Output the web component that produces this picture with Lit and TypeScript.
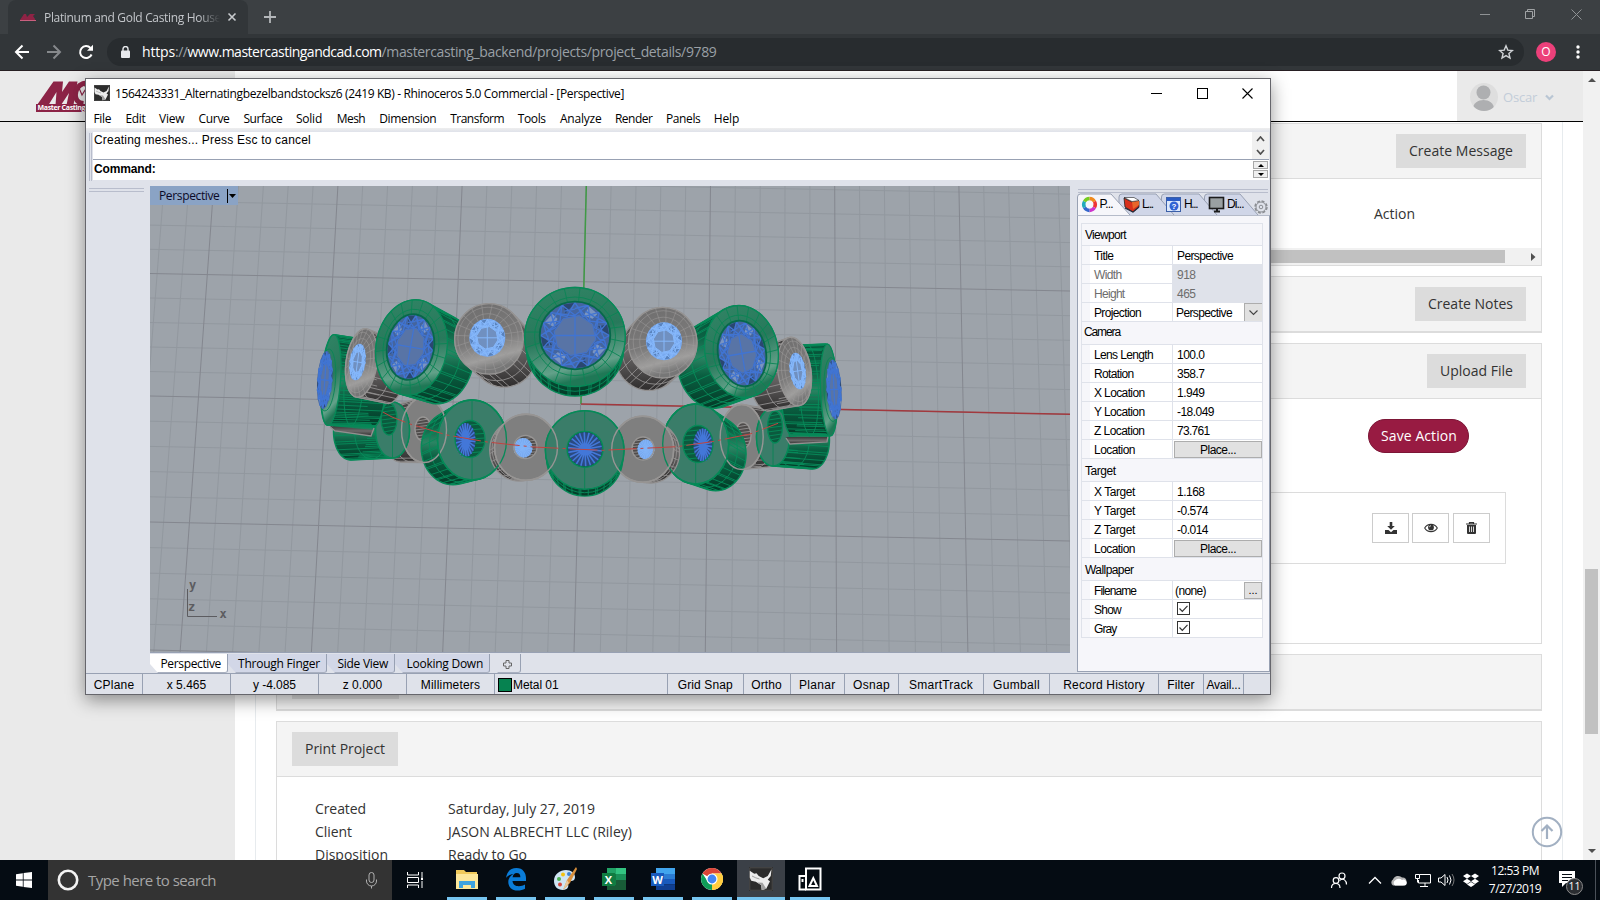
import { LitElement, html, css, svg } from "lit";
import { customElement, property } from "lit/decorators.js";

/* Text run spread over a given width. */
@customElement("fit-text")
class FitText extends LitElement {
  @property({ type: Number }) w = 0;
  static styles = css`
    :host { display: inline-block; white-space: pre; flex: none; text-align: left; }
  `;
  firstUpdated() {
    const natural = this.getBoundingClientRect().width;
    const n = (this.textContent || "").length;
    if (!this.w || !n) return;
    this.style.letterSpacing = ((this.w - natural) / n).toFixed(3) + "px";
    this.style.width = this.w + "px";
  }
  render() { return html`<slot></slot>`; }
}

const fit = (t: string, w: number) => html`<fit-text .w=${w}>${t}</fit-text>`;

/* ---------- 3D scene ---------- */
type P = [number, number];
const f1 = (n: number) => n.toFixed(1);

function ellPt(cx: number, cy: number, rx: number, ry: number, rot: number, a: number): P {
  const c = Math.cos((rot * Math.PI) / 180), s = Math.sin((rot * Math.PI) / 180);
  const x = rx * Math.cos(a), y = ry * Math.sin(a);
  return [cx + x * c - y * s, cy + x * s + y * c];
}

function hull(points: P[]): P[] {
  const p = [...points].sort((a, b) => a[0] - b[0] || a[1] - b[1]);
  const cr = (o: P, a: P, b: P) => (a[0] - o[0]) * (b[1] - o[1]) - (a[1] - o[1]) * (b[0] - o[0]);
  const half = (list: P[]) => {
    const h: P[] = [];
    for (const q of list) {
      while (h.length > 1 && cr(h[h.length - 2], h[h.length - 1], q) <= 0) h.pop();
      h.push(q);
    }
    h.pop();
    return h;
  };
  return [...half(p), ...half(p.reverse())];
}

const toPath = (p: P[]) => "M" + p.map((q) => f1(q[0]) + " " + f1(q[1])).join("L") + "Z";
const ell = (cx: number, cy: number, rx: number, ry: number, rot: number, cls: string) =>
  svg`<ellipse class=${cls} cx=${f1(cx)} cy=${f1(cy)} rx=${f1(rx)} ry=${f1(ry)} transform="rotate(${rot} ${f1(cx)} ${f1(cy)})"/>`;

interface Part {
  x: number; y: number; rx: number; ry: number; rot?: number;
  dx: number; dy: number; k?: number; n?: number; c: "g" | "s";
}

function body(o: Part) {
  const rot = o.rot ?? 0, k = o.k ?? 0.95, n = o.n ?? 34;
  const pts: P[] = [];
  for (let i = 0; i < 60; i++) {
    const a = (i / 60) * Math.PI * 2;
    pts.push(ellPt(o.x, o.y, o.rx, o.ry, rot, a));
    pts.push(ellPt(o.x + o.dx, o.y + o.dy, o.rx * k, o.ry * k, rot, a));
  }
  let lines = "";
  for (let i = 0; i < n; i++) {
    const a = (i / n) * Math.PI * 2 + (i % 3) * 0.05;
    const p = ellPt(o.x, o.y, o.rx, o.ry, rot, a), q = ellPt(o.x + o.dx, o.y + o.dy, o.rx * k, o.ry * k, rot, a);
    lines += `M${f1(p[0])} ${f1(p[1])}L${f1(q[0])} ${f1(q[1])}`;
  }
  const d = toPath(hull(pts));
  return svg`
    <path class="${o.c}-body" d=${d}/>
    <path class="${o.c}-line" d=${lines}/>
    ${[0.5].map((t) => ell(o.x + o.dx * t, o.y + o.dy * t, o.rx * (1 - (1 - k) * t), o.ry * (1 - (1 - k) * t), rot, o.c + "-line"))}
    <path class="${o.c}-edge" d=${d}/>`;
}

function gem(x: number, y: number, rx: number, ry: number, rot: number, dark: boolean) {
  let star = "", web = "", oct = "", fac = "", shade = "";
  const at = (r: number, a: number) => { const p = ellPt(x, y, rx * r, ry * r, rot, a); return f1(p[0]) + " " + f1(p[1]); };
  const n = 16;
  for (let i = 0; i < n; i++) {
    const a = (i / n) * Math.PI * 2, b = ((i + 1) / n) * Math.PI * 2, c = ((i + 2) / n) * Math.PI * 2;
    star += `M${at(0.98, a)}L${at(0.6, b)}L${at(0.98, c)}`;
    if (i % 2 === 0) {
      web += `M${at(0.96, a)}L${at(0.58, c)}M${at(0.8, a)}L${at(0.97, b)}`;
      oct += (i ? "L" : "M") + at(0.6, a + 0.2);
    } else web += `M${at(0.78, a)}L${at(0.78, b)}`;
    if (i % 4 === 1) fac += `M${at(0.64, a)}L${at(0.94, a + 0.05)}L${at(0.9, b)}L${at(0.7, b)}Z`;
    if (i % 4 === 3) shade += `M${at(0.7, a)}L${at(0.97, a + 0.05)}L${at(0.97, b)}Z`;
  }
  const p = dark ? "d" : "l";
  return svg`
    ${ell(x, y, rx, ry, rot, p + "-gem")}
    <path class="${p}-fac" d=${fac}/>
    <path class="${p}-shade" d=${shade}/>
    <path class="${p}-oct" d=${oct + "Z"}/>
    <path class="${p}-wire" d=${star + web}/>
    <path class="${p}-wire" d="M${at(0.6, 0)}L${at(0.6, Math.PI)}M${at(0.6, Math.PI / 2)}L${at(0.6, -Math.PI / 2)}"/>`;
}

function head(o: Part & { gx: number; gy: number; grx: number; gry: number }) {
  const rot = o.rot ?? 0;
  let spokes = "";
  for (let i = 0; i < 20; i++) {
    const a = (i / 20) * Math.PI * 2 + 0.1;
    const p = ellPt(o.x, o.y, o.rx, o.ry, rot, a), q = ellPt(o.gx, o.gy, o.grx, o.gry, rot, a);
    spokes += `M${f1(p[0])} ${f1(p[1])}L${f1(q[0])} ${f1(q[1])}`;
  }
  return svg`
    ${body(o)}
    ${ell(o.x, o.y, o.rx, o.ry, rot, o.c + "-face")}
    ${ell((o.x + o.gx) / 2, (o.y + o.gy) / 2, o.rx * 0.35 + o.grx * 0.65, o.ry * 0.35 + o.gry * 0.65, rot, o.c + "-thin")}
    ${o.c === "s" ? ell((o.x + o.gx) / 2, (o.y + o.gy) / 2, o.rx * 0.75 + o.grx * 0.25, o.ry * 0.75 + o.gry * 0.25, rot, "s-thin") : ""}
    <path class="${o.c}-thin" d=${spokes}/>
    ${gem(o.gx, o.gy, o.grx, o.gry, rot, o.c === "g")}
    ${o.c === "g" ? ell(o.gx, o.gy, o.grx, o.gry, rot, "g-inner") : ""}`;
}

function disc(o: Part & { hx: number; hy: number; hrx: number; hry: number; gem?: [number, number, number, number] }) {
  let rays = "", slats = "";
  if (o.gem) {
    const [x, y, rx, ry] = o.gem;
    for (let i = 0; i < 22; i++) {
      const a = (i / 22) * Math.PI * 2 + 0.1;
      rays += `M${f1(x)} ${f1(y)}L${f1(x + rx * Math.cos(a))} ${f1(y + ry * Math.sin(a))}`;
    }
  }
  for (let i = -3; i <= 3; i++) {
    const w = o.hrx * Math.sqrt(1 - (i / 4) ** 2), y = o.hy + (i / 4) * o.hry;
    slats += `M${f1(o.hx - w)} ${f1(y + 1)}L${f1(o.hx + w)} ${f1(y - 1)}`;
  }
  return svg`
    ${body(o)}
    ${ell(o.x, o.y, o.rx, o.ry, 0, o.c + "-disc")}
    ${o.c === "g" ? svg`<path class="g-thin" d="M${o.x} ${o.y - o.ry}V${o.y + o.ry}"/>` : ""}
    ${ell(o.hx, o.hy, o.hrx, o.hry, 0, o.c + "-hole")}
    <path class="${o.c}-line" d=${slats}/>
    ${o.gem ? svg`${ell(o.gem[0], o.gem[1], o.gem[2], o.gem[3], 0, o.c === "g" ? "ray-bg" : "l-gem")}
      <path class=${o.c === "g" ? "ray" : "ray-l"} d=${rays}/>` : ""}
    ${ell(o.hx, o.hy, o.hrx, o.hry, 0, o.c + "-rim")}`;
}

function grid() {
  let minor = "", major = "";
  for (let i = -22; i <= 22; i++) {
    const t = i / 5;
    const d = `M${f1(586.3 + t * 124.2)} 186L${f1(574 + t * 131.3)} 652`;
    if (i % 5 === 0) major += d; else minor += d;
  }
  const L = [152.5, 273.5, 396, 522, 650, 782], R = [170, 291, 414.3, 541, 671, 803];
  for (let m = 0; m < 5; m++)
    for (let j = 0; j < 5; j++) {
      const y0 = L[m] + ((L[m + 1] - L[m]) * j) / 5, y1 = R[m] + ((R[m + 1] - R[m]) * j) / 5;
      const d = `M150 ${f1(y0)}L1070 ${f1(y1)}`;
      if (j === 0) major += d; else minor += d;
    }
  return svg`<path class="minor" d=${minor}/><path class="major" d=${major}/>`;
}

const scene = () => html`
<svg class="scene" viewBox="150 186 920 466" width="920" height="466">
  <defs>
    <linearGradient id="gb" x1="0" y1="0" x2="0" y2="1">
      <stop offset="0" stop-color="#064d34"/><stop offset=".3" stop-color="#0b6244"/><stop offset=".5" stop-color="#2a8563"/><stop offset=".68" stop-color="#0a5f41"/><stop offset="1" stop-color="#033a27"/>
    </linearGradient>
    <linearGradient id="sb" x1="0" y1="0" x2="0" y2="1">
      <stop offset="0" stop-color="#3a3838"/><stop offset=".5" stop-color="#6c6a6a"/><stop offset="1" stop-color="#2f2d2d"/>
    </linearGradient>
    <linearGradient id="gf" x1="0" y1="0" x2=".25" y2="1">
      <stop offset="0" stop-color="#1f7856"/><stop offset=".12" stop-color="#2f8263"/><stop offset=".55" stop-color="#27795b"/><stop offset=".88" stop-color="#62a189"/><stop offset="1" stop-color="#1f7856"/>
    </linearGradient>
    <linearGradient id="sf" x1="0" y1="0" x2=".25" y2="1">
      <stop offset="0" stop-color="#6e6d6d"/><stop offset=".6" stop-color="#7b7a7a"/><stop offset=".85" stop-color="#a09f9e"/><stop offset="1" stop-color="#777"/>
    </linearGradient>
  </defs>
  ${grid()}
  <path class="axis-y" d="M586.3 186L581 404"/>
  <path class="axis-x" d="M581 404L1070 414.3"/>

  ${disc({ c: "s", x: 424, y: 430, rx: 22.5, ry: 32.5, dx: -22, dy: 3, k: 0.9, n: 18, hx: 423, hy: 429, hrx: 8, hry: 12 })}
  ${disc({ c: "g", x: 392.5, y: 430, rx: 17, ry: 28, dx: -42, dy: 2, k: 1, n: 34, hx: 389, hy: 419, hrx: 8, hry: 16 })}
  ${disc({ c: "s", x: 741.7, y: 437, rx: 21.5, ry: 32.5, dx: 24, dy: 1, k: 0.9, n: 18, hx: 743, hy: 435.5, hrx: 8, hry: 13 })}
  ${disc({ c: "g", x: 773, y: 437, rx: 16.5, ry: 29, dx: 40, dy: 3, k: 1, n: 34, hx: 775, hy: 427, hrx: 7.5, hry: 16 })}
  ${disc({ c: "g", x: 472, y: 440, rx: 34.5, ry: 40, dx: -19, dy: 8, k: 0.92, n: 44, hx: 470, hy: 439, hrx: 15, hry: 18.5, gem: [465.5, 440, 10, 17] })}
  ${disc({ c: "g", x: 695.7, y: 444, rx: 33, ry: 40, dx: 20, dy: 10, k: 0.92, n: 44, hx: 698, hy: 444, hrx: 15, hry: 18.5, gem: [703, 445, 9.5, 16.5] })}
  ${disc({ c: "s", x: 526, y: 447.3, rx: 31.5, ry: 33, dx: -7, dy: 3, k: 0.93, n: 30, hx: 525.5, hy: 447, hrx: 11.5, hry: 11.5, gem: [523, 448, 9.5, 10] })}
  ${disc({ c: "s", x: 642.7, y: 449.3, rx: 31, ry: 33, dx: 8, dy: 3, k: 0.93, n: 30, hx: 643, hy: 448.5, hrx: 11, hry: 11.5, gem: [646, 449.5, 8.5, 10] })}
  ${disc({ c: "g", x: 584.7, y: 450, rx: 39.3, ry: 39.3, dx: 0, dy: 8, k: 0.97, n: 44, hx: 585, hy: 449.3, hrx: 18, hry: 18, gem: [585, 449.3, 17, 17] })}
  ${ell(424, 430, 22.5, 32.5, 0, "s-rim")}${ell(741.7, 437, 21.5, 32.5, 0, "s-rim")}
  ${ell(472, 440, 34.5, 40, 0, "g-rim")}${ell(695.7, 444, 33, 40, 0, "g-rim")}
  ${ell(526, 447.3, 31.5, 33, 0, "s-rim")}${ell(642.7, 449.3, 31, 33, 0, "s-rim")}
  <path class="red" d="M380 410.500L392 417L410 424L447 435L487 442L533 447L580 449.300L603 450.300L643 448.300L677 446.700L712 441.700L750 434L778 423.300"/>

  <path class="s-body" d="M330 426L374 430L371 436L335 431Z"/><path class="s-edge" d="M330 427L335 431L371 436L374 428"/>
  <path class="s-body" d="M786 437L828 437L827 442L790 444Z"/><path class="s-edge" d="M786 438L790 444L827 442L828 436"/>
  ${body({ c: "g", x: 331, y: 380, rx: 10, ry: 45.5, rot: 4, dx: 46, dy: 4, k: 0.93, n: 40 })}
  ${ell(331, 380, 9.5, 45.5, 4, "g-face")}
  ${ell(327, 380, 8.5, 31, 4, "g-thin")}
  ${gem(324.8, 380, 7.6, 29, 4, true)}
  ${body({ c: "g", x: 828, y: 390, rx: 9.5, ry: 46, rot: -2, dx: -38, dy: 0, k: 0.97, n: 40 })}
  ${ell(829, 390, 8.5, 46, -2, "g-face")}
  ${ell(832, 389.5, 8, 32, -2, "g-thin")}
  ${gem(834, 389.5, 7.5, 30, -3, true)}

  ${head({ c: "s", x: 361.5, y: 363, rx: 15.5, ry: 34.5, rot: 8, dx: 30, dy: 9, k: 0.92, n: 20, gx: 357.5, gy: 362, grx: 8, gry: 18.5 })}
  ${head({ c: "s", x: 794.5, y: 371.5, rx: 16.5, ry: 34.5, rot: -8, dx: -30, dy: 8, k: 0.92, n: 20, gx: 797.7, gy: 371, grx: 8, gry: 18.5 })}
  ${head({ c: "g", x: 411.5, y: 347.5, rx: 35.5, ry: 48, rot: 10, dx: 29, dy: 12, k: 0.93, n: 44, gx: 410.5, gy: 347, grx: 23.5, gry: 33 })}
  ${head({ c: "g", x: 741.5, y: 351.5, rx: 36.5, ry: 46.2, rot: -10, dx: -30, dy: 14, k: 0.93, n: 44, gx: 742, gy: 353.5, grx: 24, gry: 33 })}
  ${head({ c: "s", x: 489, y: 338.9, rx: 34.3, ry: 35.3, dx: 15, dy: 14, k: 0.97, n: 24, gx: 487.3, gy: 337.8, grx: 18, gry: 19 })}
  ${head({ c: "s", x: 662.7, y: 342.7, rx: 34.3, ry: 35.3, dx: -14, dy: 13.5, k: 0.97, n: 24, gx: 664, gy: 341.2, grx: 18, gry: 19 })}
  ${head({ c: "g", x: 575, y: 337, rx: 50.2, ry: 49.5, dx: 0, dy: 11, k: 0.97, n: 44, gx: 575, gy: 335.5, grx: 35.3, gry: 33.8 })}

  <path class="tri" d="M187.500 589V616.500H217"/>
  <g class="tri-t"><text x="189" y="589">y</text><text x="188" y="611">z</text><text x="219.500" y="618">x</text></g>
</svg>`;

/* ---------- icons ---------- */
const rhino = (s: number) => svg`<svg width=${s} height=${s} viewBox="0 0 16 16">
  <rect width="16" height="16" fill="#111"/><rect x=".5" y=".5" width="15" height="15" fill="#2c2c2c" stroke="#555" stroke-width=".6"/>
  <path d="M.5 2.500L3.500 4.500L5 4.200L6.500 6L9.500 7.500L12.500 6L15 1.500L14.500 6L12.500 8.500L14 9.500L11.500 14.500L8.500 15.300L8 12L4.500 9.800L1.500 9.200L.5 7Z" fill="#ececec"/>
  <path d="M5.500 10.300L9 10.500L11.500 14.500L8.500 15.300L8 12Z" fill="#9f9f9f"/><path d="M2 6l2.500 1.200L7 8" stroke="#999" stroke-width=".6" fill="none"/></svg>`;

const ICONS: Record<string, any> = {
  folder: svg`<svg width="26" height="26" viewBox="0 0 26 26"><path d="M2 4h8l2 2h11v17H2z" fill="#f0c95a"/><path d="M2 8h22v15H2z" fill="#fde79a"/><path d="M5 22v-7h16v7h-4v-3h-8v3z" fill="#3fa3df"/></svg>`,
  edge: svg`<svg width="24" height="26" viewBox="0 0 24 26"><path d="M2 12C3 5 7 2 12.500 2 19 2 22 7 22 12v3H8.500c.3 3.600 3 5.200 6.300 5.200 2.400 0 4.400-.6 6.200-1.700v4.300c-2 1.200-4.600 1.800-7.300 1.800C8 24.600 4.300 21 4.300 16c0-3.500 2-6.500 5-8C6 8.300 3.500 10 2 12zm6.600-.8h7.800c0-2.600-1.200-4.200-3.700-4.200-2.300 0-3.700 1.700-4.100 4.200z" fill="#0a7cd8"/></svg>`,
  paint: svg`<svg width="26" height="26" viewBox="0 0 26 26"><path d="M2 15C2 8 8 4 14 4c5 0 9 3 9 7 0 4-3 4-5 4s-3 1-2 3 0 6-5 6c-6 0-9-4-9-9z" fill="#cfe4f3"/><circle cx="7" cy="13" r="2" fill="#4caf50"/><circle cx="11" cy="8.500" r="2" fill="#f4c20d"/><circle cx="17" cy="8" r="2" fill="#3b82d0"/><circle cx="8" cy="18.500" r="2" fill="#d6453c"/><path d="M24 1L15 14l-4 10 7-7 7-14z" fill="#d9903c"/><path d="M15 14l-4 10 6-7z" fill="#e8c9a0"/></svg>`,
  excel: svg`<svg width="26" height="26" viewBox="0 0 26 26"><rect x="6" y="2" width="19" height="22" fill="#21a366"/><rect x="15" y="2" width="10" height="6" fill="#33c481"/><rect x="6" y="13" width="19" height="11" fill="#185c37"/><rect x="15" y="8" width="10" height="6" fill="#1a9058"/><rect x="6" y="8" width="9" height="11" fill="#107c41"/><rect x="1" y="7" width="13" height="13" fill="#107c41"/><text x="7.500" y="17.500" class="ic">X</text></svg>`,
  word: svg`<svg width="26" height="26" viewBox="0 0 26 26"><rect x="6" y="2" width="19" height="6" fill="#41a5ee"/><rect x="6" y="8" width="19" height="5.500" fill="#2b7cd3"/><rect x="6" y="13" width="19" height="5.500" fill="#185abd"/><rect x="6" y="18.500" width="19" height="5.500" fill="#103f91"/><rect x="1" y="7" width="13" height="13" fill="#185abd"/><text x="7.500" y="17.500" class="ic">W</text></svg>`,
  chrome: svg`<svg width="24" height="24" viewBox="0 0 24 24"><circle cx="12" cy="12" r="11" fill="#fff"/><path d="M12 12L2.500 6.500A11 11 0 0 1 21.500 6.500H12z" fill="#db4437"/><path d="M12 12L21.500 6.500A11 11 0 0 1 12 23z" fill="#ffcd40"/><path d="M12 12v11A11 11 0 0 1 2.500 6.500L8 15z" fill="#0f9d58"/><path d="M12 6.500h9.500A11 11 0 0 1 12 23l5-8z" fill="#ffcd40"/><circle cx="12" cy="12" r="5.500" fill="#fff"/><circle cx="12" cy="12" r="4.400" fill="#4285f4"/></svg>`,
  rhino: rhino(24),
  scan: svg`<svg width="24" height="24" viewBox="0 0 24 24" fill="none" stroke="#fff" stroke-width="2"><path d="M8 22.500V1.500h14.500v21z"/><path d="M8 9H1.500v13.500H8M4.500 12v3"/><path d="M11.500 19L15.300 11 19 19z"/></svg>`,
};

const MENU: [string, number][] = [
  ["File", 17.5], ["Edit", 20], ["View", 25.5], ["Curve", 31], ["Surface", 39], ["Solid", 26],
  ["Mesh", 28.5], ["Dimension", 57], ["Transform", 53.8], ["Tools", 28], ["Analyze", 41.5],
  ["Render", 37.5], ["Panels", 34.5], ["Help", 25.5],
];
const STATUS: [string, number, number][] = [
  ["CPlane", 40.5, 57], ["x 5.465", 39.5, 88], ["y -4.085", 43, 88], ["z 0.000", 39.5, 88], ["Millimeters", 59.5, 88], ["Metal 01", 45.5, 173],
  ["Grid Snap", 55, 75.5], ["Ortho", 30.5, 47], ["Planar", 36.5, 54.5], ["Osnap", 37, 54], ["SmartTrack", 64, 85], ["Gumball", 47, 66],
  ["Record History", 81.5, 109], ["Filter", 27.5, 45], ["Avail...", 34, 40], ["", 0, 27],
];
const TABS: [string, number, number][] = [["Perspective", 60.5, 78], ["Through Finger", 82, 99], ["Side View", 50.5, 68], ["Looking Down", 76.5, 95]];
type Row = [string, number, string, number, string?];
const PROPS: [string, number, Row[]][] = [
  ["Viewport", 41, [["Title", 19.5, "Perspective", 56], ["Width", 27.5, "918", 18.5, "dis"], ["Height", 30.5, "465", 18.5, "dis"], ["Projection", 47, "Perspective", 56, "drop"]]],
  ["Camera", 36, [["Lens Length", 59, "100.0", 27.5], ["Rotation", 39.5, "358.7", 27.5], ["X Location", 50.5, "1.949", 27.5], ["Y Location", 50.5, "-18.049", 37], ["Z Location", 50.5, "73.761", 32.5], ["Location", 41, "Place...", 36, "btn"]]],
  ["Target", 30.5, [["X Target", 41, "1.168", 27.5], ["Y Target", 41, "-0.574", 31], ["Z Target", 41, "-0.014", 31], ["Location", 41, "Place...", 36, "btn"]]],
  ["Wallpaper", 48.5, [["Filename", 42, "(none)", 31, "file"], ["Show", 27, "", 0, "chk"], ["Gray", 22.5, "", 0, "chk"]]],
];

@customElement("app-root")
class AppRoot extends LitElement {
  static styles = css`
    :host { display: block; width: 1600px; height: 900px; position: relative; overflow: hidden; background: #fff;
      font-family: "Open Sans", "Noto Sans", sans-serif; color: #333; }
    * { box-sizing: border-box; }
    svg { display: block; flex: none; }
    .screen { display: flex; flex-direction: column; height: 900px; }
    /* browser */
    .strip { height: 34px; background: #3c4043; display: flex; padding-left: 8px; flex: none; }
    .tab { width: 240px; height: 34px; background: #323639; border-radius: 8px 8px 0 0; display: flex; align-items: center; padding-left: 12px; font-size: 12px; color: #c3c6ca; }
    .tab .name { width: 176px; margin-left: 8px; overflow: hidden; white-space: nowrap; -webkit-mask-image: linear-gradient(90deg, #000 88%, transparent); mask-image: linear-gradient(90deg, #000 88%, transparent); }
    .tab .x { margin-left: 7px; }
    .plus { margin: 11px 0 0 16px; }
    .ctl { margin-left: auto; display: flex; gap: 35px; padding: 9px 18px 0 0; }
    .bar { height: 37px; background: #323639; border-bottom: 1px solid #271f23; display: flex; align-items: center; flex: none; padding: 0 14px 0 14px; }
    .bar .b1 { margin-right: 16px; }
    .omni { width: 1417px; height: 28px; border-radius: 14px; background: #282c2f; margin-left: 13px; display: flex; align-items: center; padding: 0 10px 0 14px; font-size: 14px; color: #9aa0a6; }
    .omni .url { margin-left: 12px; display: flex; line-height: 18px; }
    .omni .hi { color: #fff; }
    .omni .star { margin-left: auto; }
    .ava { width: 20px; height: 20px; border-radius: 50%; background: #ec407a; color: #fff; font-size: 12px; line-height: 20px; text-align: center; margin-left: 12px; }
    .dots { margin-left: 20px; }
    /* page */
    .page { height: 789px; display: flex; flex: none; }
    .side { width: 235px; background: #eaeaea; flex: none; }
    .side .logo { height: 51px; border-bottom: 1px solid #000; padding: 9px 0 0 36px; }
    .main { flex: 1; display: flex; flex-direction: column; height: 789px; overflow: hidden; }
    .top { height: 51px; flex: none; border-bottom: 1px solid #000; display: flex; justify-content: flex-end; background: #fff; }
    .user { width: 126px; background: #eaeaea; display: flex; align-items: center; padding: 2px 0 0 13px; color: #c3cdd9; font-size: 13px; }
    .user .nm { margin: 0 8px 0 5px; }
    .wrap { margin: 0 20px; border: solid #e7ebee; border-width: 0 1px; padding: 1px 20px 0; height: 738px; }
    .card { border: 1px solid #dcdcdc; background: #fff; margin-bottom: 10px; width: 1266px; }
    .ch { height: 55px; background: #f4f4f4; border-bottom: 1px solid #dcdcdc; padding: 10px 15px; display: flex; }
    .ch.r { justify-content: flex-end; }
    .gb { height: 34px; background: #dcdcdc; font-size: 14px; line-height: 33px; padding: 0 13px; }
    .gb.blank { width: 107px; }
    .c1 { height: 143px; }
    .act { height: 69px; padding: 25px 0 0 1097px; font-size: 14px; line-height: 20px; }
    .hs { height: 17px; background: #f1f1f1; display: flex; align-items: center; justify-content: space-between; padding-right: 5px; }
    .hs i { width: 1228px; height: 13px; background: #c1c1c1; }
    .c2 { height: 57px; } .c3 { height: 301px; } .c4 { height: 57px; } .c5 { height: 200px; margin: 0; }
    .saverow { padding: 20px 72px 0 0; display: flex; justify-content: flex-end; }
    .save { width: 101px; height: 34px; border-radius: 17px; background: #981b42; border: 1px solid #7c1636; color: #fff; font-size: 14px; line-height: 31px; padding-left: 12px; }
    .file { margin: 39px 35px 0 36px; height: 72px; border: 1px solid #dcdcdc; display: flex; justify-content: flex-end; padding: 20px 15px 0; gap: 4px; }
    .fb { width: 37px; height: 30px; border: 1px solid #ccc; display: flex; align-items: center; justify-content: center; }
    .fb:first-child { margin-right: -1px; }
    .kv { display: grid; grid-template-columns: 133px auto; grid-auto-rows: 23px; padding: 20px 0 0 38px; font-size: 14px; line-height: 23px; justify-content: start; }
    .vs { width: 17px; background: #f1f1f1; display: flex; flex-direction: column; align-items: center; flex: none; }
    .vs .t { width: 13px; height: 165px; background: #c1c1c1; margin-top: 487px; }
    .vs .u { margin-top: 7px; } .vs .d { margin-top: 115px; }
    .totop { position: absolute; left: 1531px; top: 816px; }
    /* taskbar */
    .task { height: 40px; background: #050c13; display: flex; flex: none; }
    .start { width: 48px; display: flex; align-items: center; justify-content: center; }
    .search { width: 344px; background: #333; display: flex; align-items: center; padding-left: 9px; color: #a6a6a6; font-size: 15px; }
    .search .q { margin-left: 9px; } .search .m { margin-left: auto; margin-right: 14px; }
    .tv { width: 50px; display: flex; align-items: center; padding-left: 15px; }
    .app { width: 49px; display: flex; flex-direction: column; align-items: center; padding: 0 4px; }
    .app span { height: 38px; display: flex; align-items: center; }
    .app i { width: 40px; height: 3px; background: #76c5f0; margin-top: -1px; }
    .app.on { background: #3b4047; width: 48px; margin-left: 1px; padding: 0; } .app.on i { width: 48px; }
    .ic { font: bold 11px "Open Sans", sans-serif; fill: #fff; text-anchor: middle; }
    .tray { margin-left: auto; display: flex; align-items: center; color: #fff; font-size: 12px; }
    .clk { display: flex; flex-direction: column; align-items: center; line-height: 18px; width: 60px; }
    .note { margin-left: 13px; } .peek { width: 1px; height: 40px; background: #4a5058; margin: 0 4px 0 11px; }
    .note text { font: 10.5px "Open Sans", sans-serif; fill: #fff; text-anchor: middle; }
    /* CAD window */
    .win { position: absolute; left: 85px; top: 78px; width: 1186px; height: 617px; border: 1px solid #66666c; background: #dfe2ea; color: #000;
      box-shadow: 0 5px 17px rgba(0,0,0,.42); display: flex; flex-direction: column; font-size: 12px; }
    .title { height: 28px; background: #fff; display: flex; align-items: center; padding: 0 17px 0 8px; flex: none; }
    .title .n { margin-left: 5px; flex: 1; line-height: 18px; padding-top: 1px; }
    .title .c { display: flex; gap: 34.500px; }
    .menu { height: 21px; background: #fff; display: grid; grid-template-columns: 32px 33.500px 39.500px 44.900px 52.600px 40.700px 42.600px 71px 67.400px 42.300px 55px 51px 47.800px auto; padding: 1px 0 0 7.500px; line-height: 22px; flex: none; }
    .menu span { height: 20px; }
    .edge { height: 4px; background: linear-gradient(#eee, #dfe2ea); flex: none; }
    .cmd { height: 49px; display: flex; padding-left: 3px; flex: none; }
    .grip { width: 3px; border: solid #b8bdcc; border-width: 0 1px; margin: 1px 1px 0 0; height: 48px; }
    .cmd .in { width: 1176px; font-family: "Liberation Sans", Arial, sans-serif; }
    .hist { height: 28px; background: #fff; border-bottom: 1px solid #98a1b3; display: flex; justify-content: space-between; padding-left: 1px; line-height: 17px; }
    .prompt { height: 20px; background: #fff; display: flex; justify-content: space-between; padding-left: 1px; font-weight: bold; line-height: 18px; }
    .sb { width: 17px; background: #f0f0f0; display: flex; flex-direction: column; justify-content: space-between; align-items: center; padding: 4px 0; }
    .spin { width: 15px; height: 17px; display: flex; flex-direction: column; gap: 1px; margin: 1px 1px 0 0; }
    .spin i { flex: 1; border: 1px solid #a8a8a8; background: #efefef; display: flex; align-items: center; justify-content: center; }
    .mid { display: flex; height: 492px; flex: none; }
    .lcol { width: 64px; padding: 7px 0 0 3px; flex: none; }
    .lg { width: 55px; height: 4px; border: solid #b8bdcc; border-width: 1px 0; }
    .vpcol { width: 920px; padding-top: 5px; flex: none; }
    .vp { height: 467px; background: #9da3aa; border-bottom: 1px solid #98a1b3; position: relative; }
    .vlabel { position: absolute; left: 0; top: 0; width: 88px; height: 19px; background: #8aa3c5; color: #0a0a28; display: flex; align-items: center; padding: 1px 0 0 9px; line-height: 18px; }
    .vlabel svg { margin-left: 7px; }
    .scene .minor { stroke: #92989f; fill: none; } .scene .major { stroke: #84878f; fill: none; }
    .axis-y { stroke: #3f9a45; stroke-width: 1.500; } .axis-x { stroke: #a2393e; stroke-width: 1.500; }
    .g-body { fill: url(#gb); } .g-line { fill: none; stroke: #078b5a; stroke-width: .9; } .g-edge { fill: none; stroke: #068a58; stroke-width: 1.400; }
    .s-body { fill: url(#sb); } .s-line { fill: none; stroke: #929090; stroke-width: .9; } .s-edge { fill: none; stroke: #929090; stroke-width: 1.300; }
    .g-face { fill: url(#gf); stroke: #068a58; stroke-width: 1.300; } .s-face { fill: url(#sf); stroke: #969493; stroke-width: 1.300; }
    .g-thin { fill: none; stroke: #0a8455; stroke-width: .9; } .s-thin { fill: none; stroke: #9b9998; stroke-width: .8; opacity: .7; }
    .g-inner { fill: none; stroke: #06694a; stroke-width: 1.800; }
    .g-disc { fill: #3a7d69; stroke: #068a58; stroke-width: 1.500; } .s-disc { fill: #7f7f7f; stroke: #979594; stroke-width: 1.500; }
    .g-hole { fill: #0b5a3e; } .s-hole { fill: #4f4c4b; }
    .g-rim { fill: none; stroke: #068a58; stroke-width: 1.300; } .s-rim { fill: none; stroke: #979594; stroke-width: 1.400; }
    .d-gem { fill: #44659f; } .d-fac { fill: #8ba4cc; opacity: .75; } .d-shade { fill: #1f3a5c; opacity: .7; } .d-oct { fill: #5874a6; stroke: #4173cf; stroke-width: 1; } .d-wire { fill: none; stroke: #4074d2; stroke-width: 1.300; }
    .l-gem { fill: #79aaf0; } .l-fac { fill: #5078b0; opacity: .8; } .l-shade { fill: #5078b0; opacity: .8; } .l-oct { fill: #7090c0; stroke: #86b8fb; } .l-wire { fill: none; stroke: #86b8fb; stroke-width: 1; }
    .ray-bg { fill: #2a4a80; } .ray { stroke: #4377d8; stroke-width: 1.600; } .ray-l { stroke: #82b4f8; }
    .red { fill: none; stroke: #c04440; stroke-width: 1; stroke-dasharray: 28 4 3 4; }
    .tri { stroke: #5c5c60; fill: none; } .tri-t text { font: bold 12px "DejaVu Sans Mono", monospace; fill: #5c5c60; }
    .vtabs { display: flex; height: 20px; padding-top: 1px; line-height: 20px; }
    .vt { height: 19px; display: flex; justify-content: flex-end; padding-right: 6px; background: #d2d7e7; border-right: 1px solid #98a1b3; clip-path: polygon(0 0, 100% 0, 100% 100%, 8px 100%, 0 10px); border-bottom: 1px solid #a9b0c0; border-radius: 0 0 3px 0; }
    .vt.on { background: #fff; } .vt.p { width: 31px; background: #dfe2ea; padding: 6px 8px 0; }
    /* properties */
    .panel { width: 194px; margin-left: 7px; display: flex; flex-direction: column; padding-top: 8px; }
    .pg { width: 190px; height: 4px; border: solid #b8bdcc; border-width: 1px 0; flex: none; margin-left: 1px; }
    .ptabs { display: flex; height: 22px; flex: none; font-family: "Liberation Sans", sans-serif; }
    .pbody { height: 457px; border: 1px solid #98a1b3; border-top-color: #b5bbc9; background: #f6f6fa; padding: 7px 0 0 3px; width: 193px; font-family: "Liberation Sans", Arial, sans-serif; }
    .tbl { width: 182px; border: 1px solid #dfe2ea; border-bottom: 0; }
    .sec { height: 23px; border-bottom: 1px solid #dfe2ea; padding-left: 3px; line-height: 25px; }
    .tbl > .sec:first-child { height: 22px; line-height: 23px; }
    .sec.camera { line-height: 21px; padding-left: 2px; }
    .row { display: grid; grid-template-columns: 8px 83px 89px; height: 19px; }
    .row > * { border-bottom: 1px solid #dfe2ea; line-height: 20px; height: 19px; }
    .lab { background: #fff; padding-left: 4px; border-right: 1px solid #dfe2ea; }
    .val { background: #fff; padding-left: 4px; display: flex; }
    .dis .lab, .dis .val { color: #6d6d6d; } .dis .val { background: #dfe2ea; }
    .drop .val, .file2 .val { padding-left: 3px; justify-content: space-between; }
    .file2 .val { padding-left: 2px; }
    .dd { width: 18px; height: 18px; background: #e1e1e1; border: solid #adadad; border-width: 1px 0 0 1px; display: flex; align-items: center; justify-content: center; }
    .el { width: 18px; height: 17px; background: #e1e1e1; border: 1px solid #adadad; line-height: 15px; text-align: center; font-size: 11px; margin-top: 1px; }
    .btn .val { padding: 1px 0 0 1px; }
    .pb { width: 88px; height: 17px; background: #e1e1e1; border: 1px solid #adadad; line-height: 16px; text-align: center; }
    .chk .val { padding: 2px 0 0 4px; }
    .status { height: 21px; border-top: 1px solid #98a1b3; display: flex; font-family: "Liberation Sans", Arial, sans-serif; line-height: 22px; flex: none; }
    .cell { height: 20px; border-right: 1px solid #98a1b3; text-align: center; display: flex; justify-content: center; flex: none; }
    .cell.metal { justify-content: flex-start; padding-left: 3px; gap: 1px; }
    .sw { width: 14px; height: 14px; background: #068250; border: 1px solid #000; margin-top: 4px; }
    .cell:last-child { border: 0; }
  `;

  private browser() {
    return html`
    <div class="strip">
      <div class="tab">
        <svg width="16" height="8" viewBox="0 0 16 8"><path d="M0 7L4 1h2l1 3 3-3h5l-2 2 2 3v1z" fill="#8f2345"/><path d="M0 7.500h16" stroke="#c9607f"/></svg>
        <div class="name">${fit("Platinum and Gold Casting House", 177)}</div>
        <svg class="x" width="10" height="10" viewBox="0 0 10 10"><path d="M1.500 1.500l7 7M8.500 1.500l-7 7" stroke="#c8cbce" stroke-width="1.600"/></svg>
      </div>
      <svg class="plus" width="12" height="12" viewBox="0 0 12 12"><path d="M6 0v12M0 6h12" stroke="#b4b7ba" stroke-width="1.800"/></svg>
      <div class="ctl">
        <svg width="10" height="11"><path d="M0 5.500h10" stroke="#8f9294"/></svg>
        <svg width="11" height="11" fill="none" stroke="#a0a3a5"><path d="M.5 2.500h7v7h-7zM2.500 2.500v-2h7v7h-2"/></svg>
        <svg width="11" height="11"><path d="M.5.5l10 10M10.500.5l-10 10" stroke="#8f9294"/></svg>
      </div>
    </div>
    <div class="bar">
      <svg class="b1" width="16" height="16" viewBox="0 0 16 16"><path d="M15 8H2.500M8.500 1.500L2 8l6.500 6.500" fill="none" stroke="#fff" stroke-width="2"/></svg>
      <svg class="b1" width="16" height="16" viewBox="0 0 16 16"><path d="M1 8h12.500M7.500 1.500L14 8l-6.500 6.500" fill="none" stroke="#86898c" stroke-width="2"/></svg>
      <svg width="16" height="16" viewBox="0 0 16 16"><path d="M13.600 10.500A6 6 0 1 1 12.500 4" fill="none" stroke="#fff" stroke-width="2"/><path d="M15 .8v6H9z" fill="#fff"/></svg>
      <div class="omni">
        <svg width="9" height="12" viewBox="0 0 9 12"><rect y="4.500" width="9" height="7.500" rx="1" fill="#e8eaed"/><path d="M2 5V3a2.500 2.500 0 0 1 5 0v2" fill="none" stroke="#e8eaed" stroke-width="1.400"/></svg>
        <div class="url"><span class="hi">${fit("https", 33)}</span>${fit("://", 12.5)}<span class="hi">${fit("www.mastercastingandcad.com", 194)}</span>${fit("/mastercasting_backend/projects/project_details/9789", 335)}</div>
        <svg class="star" width="16" height="16" viewBox="0 0 16 16"><path d="M8 1.800l1.800 4.300 4.600.4-3.500 3 1.100 4.500L8 11.600 4 14l1.100-4.500-3.500-3 4.600-.4z" fill="none" stroke="#d0d3d6" stroke-width="1.400"/></svg>
      </div>
      <div class="ava">O</div>
      <svg class="dots" width="4" height="16"><circle cx="2" cy="3" r="1.700" fill="#fff"/><circle cx="2" cy="8" r="1.700" fill="#fff"/><circle cx="2" cy="13" r="1.700" fill="#fff"/></svg>
    </div>`;
  }

  private page() {
    return html`
    <div class="page">
      <div class="side"><div class="logo">
        <svg width="64" height="33" viewBox="0 0 64 33"><path d="M1 25L17.500 1.500H27L26 12 33 1.500h8.500L37.500 25h-7l2.500-12-8 12h-5.500l1-13L12.500 25z" fill="#8c2346"/><path d="M54 3.500C46 1 40 7 39.500 14c-.5 5 2 9 8 9.500" stroke="#8c2346" stroke-width="5" fill="none"/><path d="M43 8l4-3 4 2-5 8z" fill="none" stroke="#8c2346" stroke-width="1.200"/><rect y="24" width="64" height="8" fill="#8c2346"/><text x="1.500" y="30.300" font-size="7" font-weight="bold" fill="#fff" font-family="Open Sans" textLength="48">Master Casting</text></svg>
      </div></div>
      <div class="main">
        <div class="top"><div class="user">
          <svg width="28" height="28" viewBox="0 0 28 28"><defs><clipPath id="cp"><circle cx="14" cy="14" r="14"/></clipPath></defs><circle cx="14" cy="14" r="14" fill="#dedede"/><g clip-path="url(#cp)" fill="#aeafb1"><circle cx="13.500" cy="9.500" r="7"/><path d="M3 26c0-12 21-12 21 0-5 4-16 4-21 0z"/></g></svg>
          <span class="nm">${fit("Oscar", 34)}</span>
          <svg width="9" height="7" viewBox="0 0 9 7"><path d="M1 1.500l3.500 3.500L8 1.500" fill="none" stroke="#b9c6d4" stroke-width="2.200"/></svg>
        </div></div>
        <div class="wrap">
          <div class="card c1"><div class="ch r"><div class="gb">${fit("Create Message", 104)}</div></div>
            <div class="act">${fit("Action", 41)}</div>
            <div class="hs"><i></i><svg width="5" height="8"><path d="M0 0l4.500 4L0 8z" fill="#505050"/></svg></div></div>
          <div class="card c2"><div class="ch r"><div class="gb">${fit("Create Notes", 85)}</div></div></div>
          <div class="card c3"><div class="ch r"><div class="gb">${fit("Upload File", 73)}</div></div>
            <div class="saverow"><div class="save">${fit("Save Action", 76)}</div></div>
            <div class="file">
              <div class="fb"><svg width="12" height="12" viewBox="0 0 12 12" fill="#333"><path d="M4.700 0h2.600v4h2.500L6 7.800 2.200 4h2.500zM0 8h3.500L6 10.200 8.500 8H12v4H0z"/></svg></div>
              <div class="fb"><svg width="14" height="10" viewBox="0 0 14 10"><path d="M.7 5C3.500.2 10.500.2 13.300 5 10.500 9.800 3.500 9.800.7 5z" fill="none" stroke="#333" stroke-width="1.100"/><circle cx="7" cy="4.400" r="2.900" fill="#333"/><path d="M5.500 4.200a1.600 1.600 0 0 1 1.500-1.600" stroke="#fff" stroke-width=".7" fill="none"/></svg></div>
              <div class="fb"><svg width="11" height="12" viewBox="0 0 11 12"><path d="M0 2h11M3.500 1.800V.6h4v1.200" stroke="#333" stroke-width="1.200" fill="none"/><path d="M1 3h9v8q0 1-1 1H2q-1 0-1-1z" fill="#333"/><path d="M3.500 4.500v5.500M5.500 4.500v5.500M7.500 4.500v5.500" stroke="#fff" stroke-width=".8"/></svg></div>
            </div></div>
          <div class="card c4"><div class="ch"><div class="gb blank"></div></div></div>
          <div class="card c5"><div class="ch"><div class="gb">${fit("Print Project", 80)}</div></div>
            <div class="kv">
              <span>${fit("Created", 51)}</span><span>${fit("Saturday, July 27, 2019", 147)}</span>
              <span>${fit("Client", 37)}</span><span>${fit("JASON ALBRECHT LLC (Riley)", 184)}</span>
              <span>${fit("Disposition", 73)}</span><span>${fit("Ready to Go", 79)}</span>
            </div></div>
        </div>
      </div>
      <div class="vs"><svg class="u" width="8" height="4"><path d="M0 4l4-4 4 4z" fill="#505050"/></svg><div class="t"></div><svg class="d" width="8" height="4"><path d="M0 0l4 4 4-4z" fill="#505050"/></svg></div>
    </div>
    <svg class="totop" width="32" height="32" viewBox="0 0 32 32" fill="none" stroke="#a2b0c2" stroke-width="2"><circle cx="16" cy="16" r="14.200"/><path d="M16 23V10M10.500 15L16 9.500l5.500 5.500" stroke-width="2.200"/></svg>`;
  }

  private row(r: Row) {
    const k = r[4] ?? "";
    const v = k === "btn" ? html`<div class="pb">${fit(r[2], r[3])}</div>`
      : k === "chk" ? html`<svg width="13" height="13"><rect x=".5" y=".5" width="12" height="12" fill="#fff" stroke="#333"/><path d="M2.500 6.500l2.800 2.800 5.200-5.500" fill="none" stroke="#333" stroke-width="1.200"/></svg>`
      : html`${fit(r[2], r[3])}${k === "drop" ? html`<div class="dd"><svg width="9" height="6"><path d="M.5.5l4 4 4-4" fill="none" stroke="#444" stroke-width="1.100"/></svg></div>` : ""}${k === "file" ? html`<div class="el">...</div>` : ""}`;
    return html`<div class="row ${k === "file" ? "file2" : k}"><span></span><div class="lab">${fit(r[0], r[1])}</div><div class="val">${v}</div></div>`;
  }

  private ptabs() {
    const t = (x: number, e: number, fill: string) => svg`<path d="M${x} 22V4q0-3 3-3H${e - 18}L${e} 22" fill=${fill} stroke="#98a1b3"/>`;
    return html`<div class="ptabs"><svg width="193" height="22" viewBox="0 0 193 22" font-size="12">
      ${t(127.5, 181, "#d0d6e8")}${t(84.5, 140, "#d0d6e8")}${t(42, 97, "#d0d6e8")}
      <path d="M.5 22V4q0-3 3-3H34L53 22" fill="#f6f6fa" stroke="#98a1b3"/>
      <g fill="none" stroke-width="3.400" transform="translate(.5 .5)"><path d="M12 5a6 6 0 0 1 5 3" stroke="#f08a1c"/><path d="M17 8a6 6 0 0 1 0 6" stroke="#e33"/><path d="M17 14a6 6 0 0 1-5 3" stroke="#c3c"/><path d="M12 17a6 6 0 0 1-5-3" stroke="#36c"/><path d="M7 14a6 6 0 0 1 0-6" stroke="#2ab"/><path d="M7 8a6 6 0 0 1 5-3" stroke="#7c2"/></g>
      <text x="22.500" y="15" textLength="14">P...</text>
      <path d="M47 5l8 4 7-1v6l-6 5-8-5z" fill="#d8301c" stroke="#222" stroke-width=".8"/><path d="M47 4.500l8 4 7-1-5-3z" fill="#fff" stroke="#222" stroke-width=".6"/><path d="M55 9l7-1v4l-6 4z" fill="#e8662a"/><path d="M48 15l8 4 6-5" stroke="#2a2a38" stroke-width="1.300" fill="none"/>
      <text x="65" y="15" textLength="12">L...</text>
      <rect x="89.500" y="4.500" width="14" height="14" fill="#dce8fb" stroke="#3b5fa8"/><rect x="90" y="5" width="13" height="3" fill="#2b5cc4"/><circle cx="97" cy="13" r="4.500" fill="#2f62d4"/><text x="94.500" y="16" font-size="8" font-weight="bold" fill="#fff">?</text>
      <text x="107" y="15" textLength="14.500">H...</text>
      <rect x="132.500" y="4.500" width="14" height="11" fill="#9aa0a2" stroke="#1c1c1c" stroke-width="1.600"/><path d="M137 18.500h6M140 16v2" stroke="#1c1c1c" stroke-width="2"/>
      <text x="150" y="15" textLength="17.500">Di...</text>
      <g fill="none" stroke="#8a8d92"><circle cx="184" cy="14" r="6" stroke-width="1.400" stroke-dasharray="3 1.700"/><circle cx="184" cy="14" r="5"/><circle cx="184" cy="14" r="1.800"/></g>
    </svg></div>`;
  }

  private cad() {
    return html`
    <div class="win">
      <div class="title">${rhino(16)}<div class="n">${fit("1564243331_Alternatingbezelbandstocksz6 (2419 KB) - Rhinoceros 5.0 Commercial - [Perspective]", 509)}</div>
        <div class="c"><svg width="11" height="11"><path d="M0 5.500h11" stroke="#000"/></svg><svg width="11" height="11"><rect x=".5" y=".5" width="10" height="10" fill="none" stroke="#000"/></svg><svg width="11" height="11"><path d="M.5.5l10 10M10.500.5l-10 10" stroke="#000" stroke-width="1.100"/></svg></div></div>
      <div class="menu">${MENU.map((m) => html`<span>${fit(m[0], m[1])}</span>`)}</div>
      <div class="edge"></div>
      <div class="cmd"><div class="grip"></div>
        <div class="in">
          <div class="hist">${fit("Creating meshes... Press Esc to cancel", 217)}<div class="sb"><svg width="9" height="6"><path d="M1 5l3.500-4L8 5" fill="none" stroke="#505050" stroke-width="1.700"/></svg><svg width="9" height="6"><path d="M1 1l3.500 4L8 1" fill="none" stroke="#505050" stroke-width="1.700"/></svg></div></div>
          <div class="prompt">${fit("Command:", 61.5)}<div class="spin"><i><svg width="6" height="3"><path d="M0 3l3-3 3 3z"/></svg></i><i><svg width="6" height="3"><path d="M0 0l3 3 3-3z"/></svg></i></div></div>
        </div></div>
      <div class="mid">
        <div class="lcol"><div class="lg"></div></div>
        <div class="vpcol">
          <div class="vp">${scene()}<div class="vlabel">${fit("Perspective", 60.5)}<svg width="10" height="16"><path d="M.5 1v14" stroke="#000"/><path d="M2 6h7l-3.500 4z"/></svg></div></div>
          <div class="vtabs">${TABS.map((t, i) => html`<div class="vt ${i === 0 ? "on" : ""}" style="width:${t[2]}px">${fit(t[0], t[1])}</div>`)}<div class="vt p"><svg width="9" height="9" viewBox="0 0 9 9"><path d="M3 .5h3V3h2.500v3H6v2.500H3V6H.5V3H3z" fill="none" stroke="#666"/></svg></div></div>
        </div>
        <div class="panel"><div class="pg"></div>${this.ptabs()}
          <div class="pbody"><div class="tbl">${PROPS.map((s) => html`<div class="sec ${s[0].toLowerCase()}">${fit(s[0], s[1])}</div>${s[2].map((r) => this.row(r))}`)}</div></div>
        </div>
      </div>
      <div class="status">${STATUS.map((s) => html`<div class="cell ${s[0] === "Metal 01" ? "metal" : ""}" style="width:${s[2]}px">${s[0] === "Metal 01" ? html`<i class="sw"></i>` : ""}${s[0] ? fit(s[0], s[1]) : ""}</div>`)}</div>
    </div>`;
  }

  private taskbar() {
    return html`
    <div class="task">
      <div class="start"><svg width="16" height="16" viewBox="0 0 16 16" fill="#fff"><path d="M0 2.200L6.800 1.200v6.400H0zM7.600 1.100L16 0v7.600H7.600zM0 8.400h6.800v6.400L0 13.800zM7.600 8.400H16V16l-8.400-1.100z"/></svg></div>
      <div class="search"><svg width="22" height="22"><circle cx="11" cy="11" r="9.200" fill="none" stroke="#f2f2f2" stroke-width="2.600"/></svg><span class="q">${fit("Type here to search", 128)}</span>
        <svg class="m" width="13" height="17" viewBox="0 0 13 17" fill="none" stroke="#b0b0b0"><rect x="4" y=".5" width="5" height="10" rx="2.500"/><path d="M1.500 7.500v1.500a5 5 0 0 0 10 0V7.500M6.500 14v2.500"/></svg></div>
      <div class="tv"><svg width="17" height="16" viewBox="0 0 17 16" fill="none" stroke="#fff"><path d="M.5 0v3h11V0M.5 16v-3h11v3M.5 5.500h11v5H.5zM15 0v5M15 9v7"/><rect x="14" y="5.500" width="2" height="2.500" fill="#fff" stroke="none"/></svg></div>
      ${Object.keys(ICONS).map((k) => html`<div class="app ${k === "rhino" ? "on" : ""}"><span>${ICONS[k]}</span><i></i></div>`)}
      <div class="tray">
        <svg width="175" height="40" viewBox="1310 860 175 40" fill="none" stroke="#fff">
          <g transform="translate(-14 0)"><circle cx="1356" cy="876" r="3" stroke-width="1.200"/><path d="M1353.500 880.500c4-3 7 0 7 4" stroke-width="1.200"/><circle cx="1350" cy="880.500" r="2.800" stroke-width="1.200"/><path d="M1345.500 888c0-6 8.500-6 8.500 0" stroke-width="1.200"/></g>
          <path d="M1369 883.500l6-6 6 6" stroke-width="1.300"/>
          <path d="M1393 885.500a3.500 3.500 0 0 1 0-6 5.500 5.500 0 0 1 9-2 4 4 0 0 1 1 8z" fill="#b4b4b4" stroke="none"/><path d="M1395 885.500a3 3 0 0 1 0-5 5 5 0 0 1 7-.5 3 3 0 0 1 3 5.500z" fill="#fff" stroke="none"/>
          <path d="M1419.500 874.500h11v8.500h-12v-3M1425 883v3M1420 886.500h8M1415.500 874.500h4v4h-4zM1417.500 878.500v4"/>
          <path d="M1438.500 878h2.500l4-3.500v11l-4-3.500h-2.500z"/><path d="M1447 877q2 3 0 6M1449.500 875.500q3 4.500 0 9"/><path d="M1452 874q4 6 0 12" stroke="#777"/>
          <g fill="#fff" stroke="none"><path d="M1467 873.500l4 2.600-4 2.600-4-2.600zM1475 873.500l4 2.600-4 2.600-4-2.600zM1467 878.700l4 2.600-4 2.600-4-2.600zM1475 878.700l4 2.600-4 2.600-4-2.600zM1471 882l4 2.600-4 2.400-4-2.400z"/></g>
        </svg>
        <div class="clk">${fit("12:53 PM", 48)}${fit("7/27/2019", 52.5)}</div>
        <svg class="note" width="26" height="30" viewBox="1558 866 26 30"><path d="M1559 872h16v12h-9l-4 4v-4h-3z" fill="#fff"/><path d="M1562 875.500h10M1562 878.500h10M1562 881.500h6" stroke="#050c13"/><circle cx="1574.500" cy="887.500" r="8" fill="#2a2d31" stroke="#8a8a8a"/><text x="1574.500" y="891">11</text></svg>
        <div class="peek"></div>
      </div>
    </div>`;
  }

  render() {
    return html`<div class="screen">${this.browser()}${this.page()}${this.taskbar()}</div>${this.cad()}`;
  }
}
